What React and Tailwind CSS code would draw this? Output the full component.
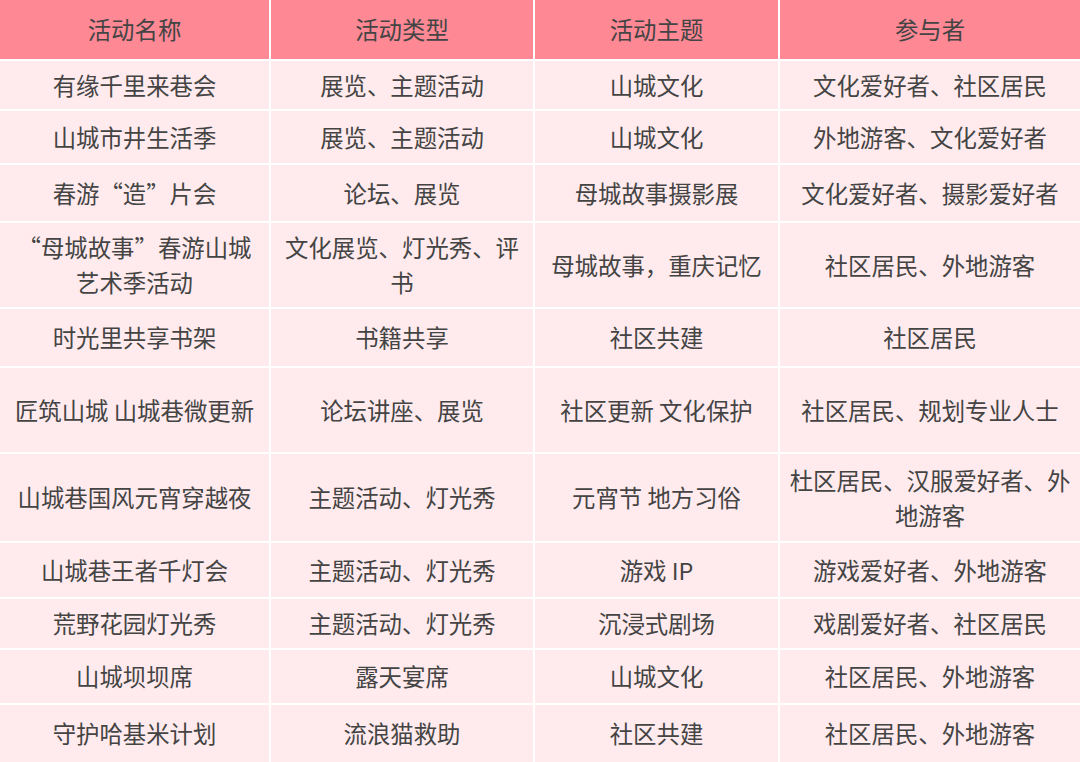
import React from "react";

const headers = ["活动名称", "活动类型", "活动主题", "参与者"];

// each cell is a list of lines
const rows = [
  [["有缘千里来巷会"], ["展览、主题活动"], ["山城文化"], ["文化爱好者、社区居民"]],
  [["山城市井生活季"], ["展览、主题活动"], ["山城文化"], ["外地游客、文化爱好者"]],
  [["春游“造”片会"], ["论坛、展览"], ["母城故事摄影展"], ["文化爱好者、摄影爱好者"]],
  [
    ["“母城故事”春游山城", "艺术季活动"],
    ["文化展览、灯光秀、评", "书"],
    ["母城故事，重庆记忆"],
    ["社区居民、外地游客"],
  ],
  [["时光里共享书架"], ["书籍共享"], ["社区共建"], ["社区居民"]],
  [["匠筑山城 山城巷微更新"], ["论坛讲座、展览"], ["社区更新 文化保护"], ["社区居民、规划专业人士"]],
  [
    ["山城巷国风元宵穿越夜"],
    ["主题活动、灯光秀"],
    ["元宵节 地方习俗"],
    ["杜区居民、汉服爱好者、外", "地游客"],
  ],
  [["山城巷王者千灯会"], ["主题活动、灯光秀"], ["游戏 IP"], ["游戏爱好者、外地游客"]],
  [["荒野花园灯光秀"], ["主题活动、灯光秀"], ["沉浸式剧场"], ["戏剧爱好者、社区居民"]],
  [["山城坝坝席"], ["露天宴席"], ["山城文化"], ["社区居民、外地游客"]],
  [["守护哈基米计划"], ["流浪猫救助"], ["社区共建"], ["社区居民、外地游客"]],
];

function Cell({lines, header}) {
  return (
    <div
      className={`flex flex-col items-center justify-center text-center whitespace-nowrap leading-[35px] ${
        header ? "bg-[#ff8895]" : "bg-[#ffebed]"
      }`}
    >
      {lines.map((line, i) => (
        <span key={i}>{line}</span>
      ))}
    </div>
  );
}

export default function App() {
  return (
    <div
      className="w-[1080px] h-[762px] overflow-hidden bg-white text-[#444444] text-[23.4px]"
      style={{fontFamily: '"Noto Sans CJK SC", "Noto Sans", sans-serif'}}
    >
      <div className="grid grid-cols-[269px_262px_243px_300px] grid-rows-[59px_48px_52px_56px_84px_57px_84px_87px_54px_49px_53px_57px] gap-[2px] bg-white">
        {headers.map((h) => (
          <Cell key={h} lines={[h]} header />
        ))}
        {rows.map((row, r) =>
          row.map((cell, c) => <Cell key={`${r}-${c}`} lines={cell} />)
        )}
      </div>
    </div>
  );
}
